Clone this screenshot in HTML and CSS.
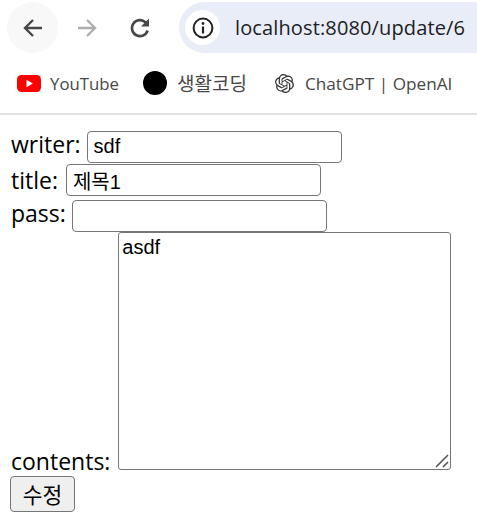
FILE: index.html
```html
<!DOCTYPE html>
<html lang="ko">
<head>
    <meta charset="UTF-8">
    <meta name="viewport" content="width=device-width, initial-scale=1.0">
    <title>update</title>
    <link rel="stylesheet" href="styles.css">
</head>
<body>

    <header class="chrome">
        <div class="toolbar">
            <span class="nav-btn nav-back">
                <svg width="24" height="24" viewBox="0 0 24 24"><path d="M21 12H5M12 4l-8 8 8 8" fill="none" stroke="#474747" stroke-width="2.4"/></svg>
            </span>
            <span class="nav-btn">
                <svg width="24" height="24" viewBox="0 0 24 24"><path d="M3 12h16M12 4l8 8-8 8" fill="none" stroke="#adadad" stroke-width="2.4"/></svg>
            </span>
            <span class="nav-btn nav-reload">
                <svg width="24" height="24" viewBox="0 0 24 24"><path d="M19.6 14.5A8 8 0 1 1 17.5 6.3L19 8" fill="none" stroke="#474747" stroke-width="2.6"/><path d="M21 2.5v8h-8z" fill="#474747"/></svg>
            </span>
            <div class="omnibox">
                <span class="site-info">
                    <svg width="24" height="24" viewBox="0 0 24 24"><circle cx="12" cy="12" r="9.4" fill="none" stroke="#222" stroke-width="2"/><path d="M12 10.5v7" stroke="#222" stroke-width="2.2"/><circle cx="12" cy="7.5" r="1.4" fill="#222"/></svg>
                </span>
                <span class="url">localhost:8080/update/6</span>
            </div>
        </div>
        <nav class="bookmarks">
            <a class="bookmark bm-youtube">
                <svg width="24" height="17" viewBox="0 0 24 17"><rect width="24" height="17" rx="4.5" fill="#f00"/><path d="M9.5 4.8v7.4l6.4-3.7z" fill="#fff"/></svg>
                YouTube
            </a>
            <a class="bookmark bm-coding">
                <span class="black-dot"></span>
                생활코딩
            </a>
            <a class="bookmark bm-gpt">
                <svg width="19" height="19" viewBox="0 0 24 24"><path fill="#333" d="M22.2819 9.8211a5.9847 5.9847 0 0 0-.5157-4.9108 6.0462 6.0462 0 0 0-6.51-2.9A6.0651 6.0651 0 0 0 4.9807 4.1818a5.9847 5.9847 0 0 0-3.9977 2.9 6.0462 6.0462 0 0 0 .7427 7.0966 5.98 5.98 0 0 0 .511 4.9107 6.051 6.051 0 0 0 6.5146 2.9001A5.9847 5.9847 0 0 0 13.2599 24a6.0557 6.0557 0 0 0 5.7718-4.2058 5.9894 5.9894 0 0 0 3.9977-2.9001 6.0557 6.0557 0 0 0-.7475-7.0729zm-9.022 12.6081a4.4755 4.4755 0 0 1-2.8764-1.0408l.1419-.0804 4.7783-2.7582a.7948.7948 0 0 0 .3927-.6813v-6.7369l2.02 1.1686a.071.071 0 0 1 .038.052v5.5826a4.504 4.504 0 0 1-4.4945 4.4944zm-9.6607-4.1254a4.4708 4.4708 0 0 1-.5346-3.0137l.142.0852 4.783 2.7582a.7712.7712 0 0 0 .7806 0l5.8428-3.3685v2.3324a.0804.0804 0 0 1-.0332.0615L9.74 19.9502a4.4992 4.4992 0 0 1-6.1408-1.6464zM2.3408 7.8956a4.485 4.485 0 0 1 2.3655-1.9728V11.6a.7664.7664 0 0 0 .3879.6765l5.8144 3.3543-2.0201 1.1685a.0757.0757 0 0 1-.071 0l-4.8303-2.7865A4.504 4.504 0 0 1 2.3408 7.872zm16.5963 3.8558L13.1038 8.364 15.1192 7.2a.0757.0757 0 0 1 .071 0l4.8303 2.7913a4.4944 4.4944 0 0 1-.6765 8.1042v-5.6772a.79.79 0 0 0-.407-.667zm2.0107-3.0231l-.142-.0852-4.7735-2.7818a.7759.7759 0 0 0-.7854 0L9.409 9.2297V6.8974a.0662.0662 0 0 1 .0284-.0615l4.8303-2.7866a4.4992 4.4992 0 0 1 6.6802 4.66zM8.3065 12.863l-2.02-1.1638a.0804.0804 0 0 1-.038-.0567V6.0742a4.4992 4.4992 0 0 1 7.3757-3.4537l-.142.0805L8.704 5.459a.7948.7948 0 0 0-.3927.6813zm1.0976-2.3654l2.602-1.4998 2.6069 1.4998v2.9994l-2.5974 1.4997-2.6067-1.4997Z"/></svg>
                ChatGPT | OpenAI
            </a>
        </nav>
    </header>

    <form class="update-form">
        writer: <input type="text" class="field" value="sdf"><br>
        title: <input type="text" class="field field-title" value="제목1"><br>
        pass: <input type="password" class="field field-pass"><br>
        contents: <span class="contents-wrap">
            <textarea class="contents">asdf</textarea>
            <svg class="grip" width="14" height="14" viewBox="0 0 14 14"><path d="M1 13L13 1M8 13l5-5" stroke="#555" stroke-width="1.6" fill="none"/></svg>
        </span><br>
        <input type="button" class="submit-btn" value="수정">
    </form>

</body>
</html>
```

FILE: styles.css
```css
* {
    box-sizing: border-box;
}

body {
    margin: 0;
    background-color: white;
    color: black;
    font: 23px/33px "Open Sans", "Noto Sans CJK KR", sans-serif;
}

.chrome {
    border-bottom: 2px solid #e3e3e3;
    overflow: hidden;
}

.toolbar {
    display: flex;
    align-items: center;
    height: 55px;
    padding: 0 0 0 7px;
}

.nav-btn {
    display: flex;
    align-items: center;
    justify-content: center;
    flex: none;
    width: 51px;
    height: 51px;
    border-radius: 50%;
    margin-right: 3px;
}

.nav-back {
    background-color: #f8f8f8;
}

.nav-reload {
    margin-left: -1px;
}

.omnibox {
    display: flex;
    align-items: center;
    flex: none;
    width: 320px;
    height: 51px;
    margin-left: 11px;
    padding-left: 6px;
    background-color: #e9edf7;
    border-radius: 26px 0 0 26px;
}

.site-info {
    display: flex;
    align-items: center;
    justify-content: center;
    flex: none;
    width: 35px;
    height: 35px;
    background-color: white;
    border-radius: 50%;
}

.url {
    margin-left: 15px;
    font: 20px "Open Sans", sans-serif;
    letter-spacing: 0.13px;
    color: #202124;
    white-space: nowrap;
}

.bookmarks {
    display: flex;
    align-items: center;
    height: 58px;
    padding: 0 0 2px 17px;
    font: 16.8px "Open Sans", "Noto Sans CJK KR", sans-serif;
    color: #474747;
    white-space: nowrap;
}

.bookmark {
    display: flex;
    align-items: center;
    gap: 9px;
}

.bm-coding {
    margin-left: 24px;
    gap: 10px;
    font-size: 19px;
}

.bm-gpt {
    margin-left: 28px;
    gap: 11px;
    font-size: 17.2px;
}

.black-dot {
    width: 24px;
    height: 24px;
    background-color: black;
    border-radius: 50%;
}

.update-form {
    padding: 13px 0 0 11px;
}

.field {
    width: 255px;
    height: 32px;
    margin-bottom: 1px;
    padding: 0 6px;
    border: 1px solid #767676;
    border-radius: 4px;
    font: 20px "Liberation Sans", "Noto Sans CJK KR", sans-serif;
    vertical-align: baseline;
}

.field-title {
    margin-left: 2px;
}

.field-pass {
    margin-bottom: 0;
}

.contents-wrap {
    display: inline-block;
    position: relative;
    margin-left: 2px;
    line-height: 0;
}

.contents {
    width: 333px;
    height: 238px;
    padding: 3px;
    border: 1px solid #767676;
    border-radius: 3px;
    font: 20px/23px "Liberation Sans", sans-serif;
    resize: none;
    vertical-align: baseline;
}

.grip {
    position: absolute;
    right: 2px;
    bottom: 2px;
}

.submit-btn {
    width: 65px;
    height: 36px;
    margin-top: -2px;
    margin-left: -1px;
    padding: 0;
    background-color: #efefef;
    border: 1px solid #767676;
    border-radius: 4px;
    font: 21.5px "Noto Sans CJK KR", sans-serif;
    color: black;
}
```
